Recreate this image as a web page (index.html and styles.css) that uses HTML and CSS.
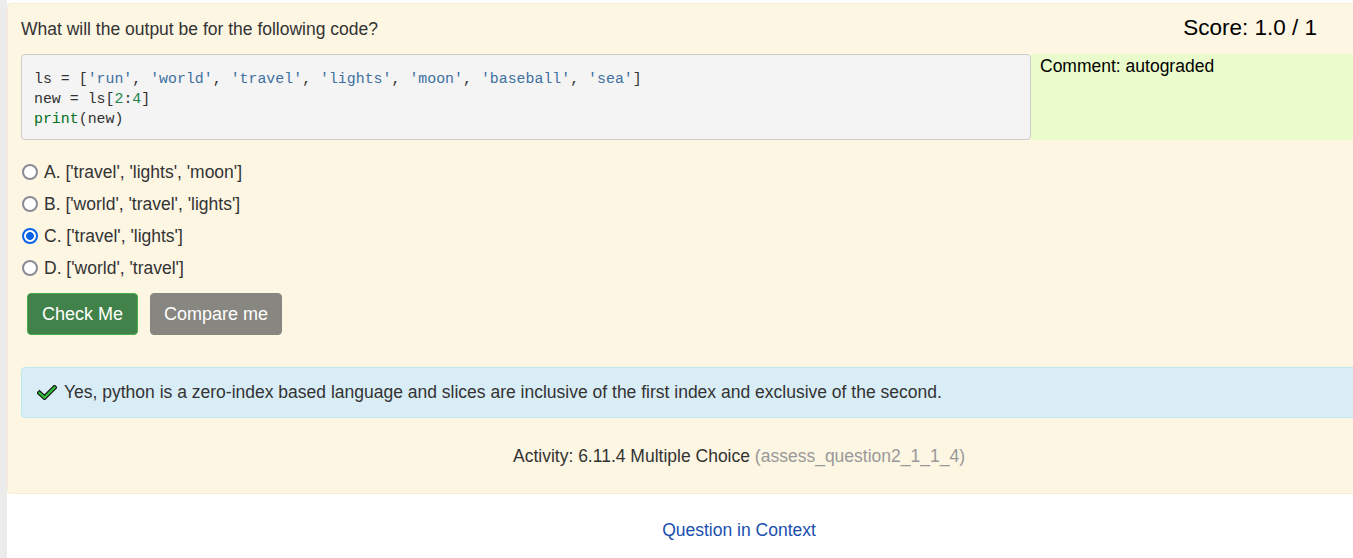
FILE: index.html
```html
<!DOCTYPE html>
<html>
<head>
<meta charset="utf-8">
<link rel="stylesheet" href="styles.css">
</head>
<body>
<div class="page">
  <div class="sidebar"></div>
  <div class="main">
    <div class="panel">
      <div class="header">
        <div class="question">What will the output be for the following code?</div>
        <div class="score">Score: 1.0 / 1</div>
      </div>
      <div class="content-row">
        <pre class="code"><span class="n">ls</span> <span class="o">=</span> <span class="p">[</span><span class="s">'run'</span><span class="p">,</span> <span class="s">'world'</span><span class="p">,</span> <span class="s">'travel'</span><span class="p">,</span> <span class="s">'lights'</span><span class="p">,</span> <span class="s">'moon'</span><span class="p">,</span> <span class="s">'baseball'</span><span class="p">,</span> <span class="s">'sea'</span><span class="p">]</span>
<span class="n">new</span> <span class="o">=</span> <span class="n">ls</span><span class="p">[</span><span class="m">2</span><span class="p">:</span><span class="m">4</span><span class="p">]</span>
<span class="b">print</span><span class="p">(</span><span class="n">new</span><span class="p">)</span></pre>
        <div class="comment">Comment: autograded</div>
      </div>
      <form class="options">
        <label class="option"><input type="radio" name="q" class="radio"><span>A. ['travel', 'lights', 'moon']</span></label>
        <label class="option"><input type="radio" name="q" class="radio"><span>B. ['world', 'travel', 'lights']</span></label>
        <label class="option"><input type="radio" name="q" class="radio" checked><span>C. ['travel', 'lights']</span></label>
        <label class="option"><input type="radio" name="q" class="radio"><span>D. ['world', 'travel']</span></label>
      </form>
      <div class="buttons">
        <button class="btn btn-check">Check Me</button>
        <button class="btn btn-compare">Compare me</button>
      </div>
      <div class="feedback">
        <svg class="check" width="20" height="15" viewBox="0 0 20 15">
          <path d="M2.5 8 L7.5 12.5 L17.5 2.5" fill="none" stroke="#1a1a1a" stroke-width="4.6" stroke-linecap="square" stroke-linejoin="miter"/>
          <path d="M2.5 8 L7.5 12.5 L17.5 2.5" fill="none" stroke="#2fc23a" stroke-width="2.2" stroke-linecap="square" stroke-linejoin="miter"/>
        </svg>
        <span>Yes, python is a zero-index based language and slices are inclusive of the first index and exclusive of the second.</span>
      </div>
      <div class="activity">Activity: 6.11.4 Multiple Choice <span class="activity-id">(assess_question2_1_1_4)</span></div>
    </div>
    <div class="context"><a href="#" class="context-link">Question in Context</a></div>
  </div>
</div>
</body>
</html>
```

FILE: styles.css
```css
html, body {
  margin: 0;
  padding: 0;
  overflow: hidden;
  background: #ffffff;
}

body {
  font-family: "Liberation Sans", Arial, sans-serif;
  font-size: 17.5px;
  color: #333333;
}

.page {
  display: flex;
  min-height: 558px;
}

.sidebar {
  width: 7px;
  flex-shrink: 0;
  background: #ececec;
}

.main {
  width: 1464px;
  flex-shrink: 0;
  padding-top: 3px;
}

.panel {
  background: #fdf6e3;
  border: 1px solid #f6ecd6;
  border-radius: 4px;
  padding: 10px 13px 27px 13px;
}

.header {
  display: flex;
  justify-content: space-between;
  align-items: center;
  height: 30px;
}

.question {
  font-size: 17.5px;
  color: #333;
}

.score {
  font-size: 22.5px;
  color: #000;
  margin-right: 140px;
  margin-top: -2px;
}

.content-row {
  display: flex;
  margin-top: 10px;
}

.code {
  box-sizing: border-box;
  width: 1010px;
  flex-shrink: 0;
  margin: 0;
  background: #f4f4f4;
  border: 1px solid #cccccc;
  border-radius: 4px;
  padding: 14px 12px 10px 12px;
  font-family: "Liberation Mono", monospace;
  font-size: 14.9px;
  line-height: 20px;
  color: #333;
}

.code .s { color: #4070a0; }
.code .m { color: #208050; }
.code .b { color: #007020; }
.code .n, .code .o, .code .p { color: #333; }

.comment {
  flex: 1;
  background: #ebfccc;
  padding: 2px 9px;
  color: #000;
  line-height: 20px;
}

.options {
  margin-top: 16px;
  display: flex;
  flex-direction: column;
}

.option {
  display: flex;
  align-items: center;
  height: 32px;
  gap: 6px;
}

.radio {
  appearance: none;
  -webkit-appearance: none;
  box-sizing: border-box;
  margin: 0 0 0 1px;
  width: 16px;
  height: 16px;
  border: 2px solid #8b8b95;
  border-radius: 50%;
  background: #ffffff;
}

.radio:checked {
  border-color: #0b63e5;
  background: radial-gradient(circle, #0b63e5 0 3.6px, #ffffff 4.2px);
}

.buttons {
  display: flex;
  gap: 12px;
  margin-top: 9px;
  margin-left: 6px;
}

.btn {
  font-family: "Liberation Sans", Arial, sans-serif;
  font-size: 18px;
  line-height: 24px;
  color: #ffffff;
  padding: 8px 13px;
  border-radius: 4px;
  cursor: pointer;
}

.btn-check {
  background: #41814a;
  border: 1px solid #4cae4c;
  padding: 8px 14px;
}

.btn-compare {
  background: #878680;
  border: 1px solid #878680;
}

.feedback {
  margin-top: 32px;
  background: #d9edf7;
  border: 1px solid #bce8f1;
  border-radius: 4px;
  padding: 15px 15px;
  display: flex;
  align-items: center;
  gap: 7px;
  line-height: 19px;
  color: #333;
}

.check {
  display: block;
  flex-shrink: 0;
}

.activity {
  margin-top: 28px;
  text-align: center;
  line-height: 20px;
  color: #333;
}

.activity-id {
  color: #999999;
}

.context {
  text-align: center;
  padding-top: 26px;
  line-height: 20px;
  padding-left: 14px;
  padding-right: 14px;
}

.context-link {
  color: #1a4fb0;
  text-decoration: none;
  font-size: 17.5px;
}
```
